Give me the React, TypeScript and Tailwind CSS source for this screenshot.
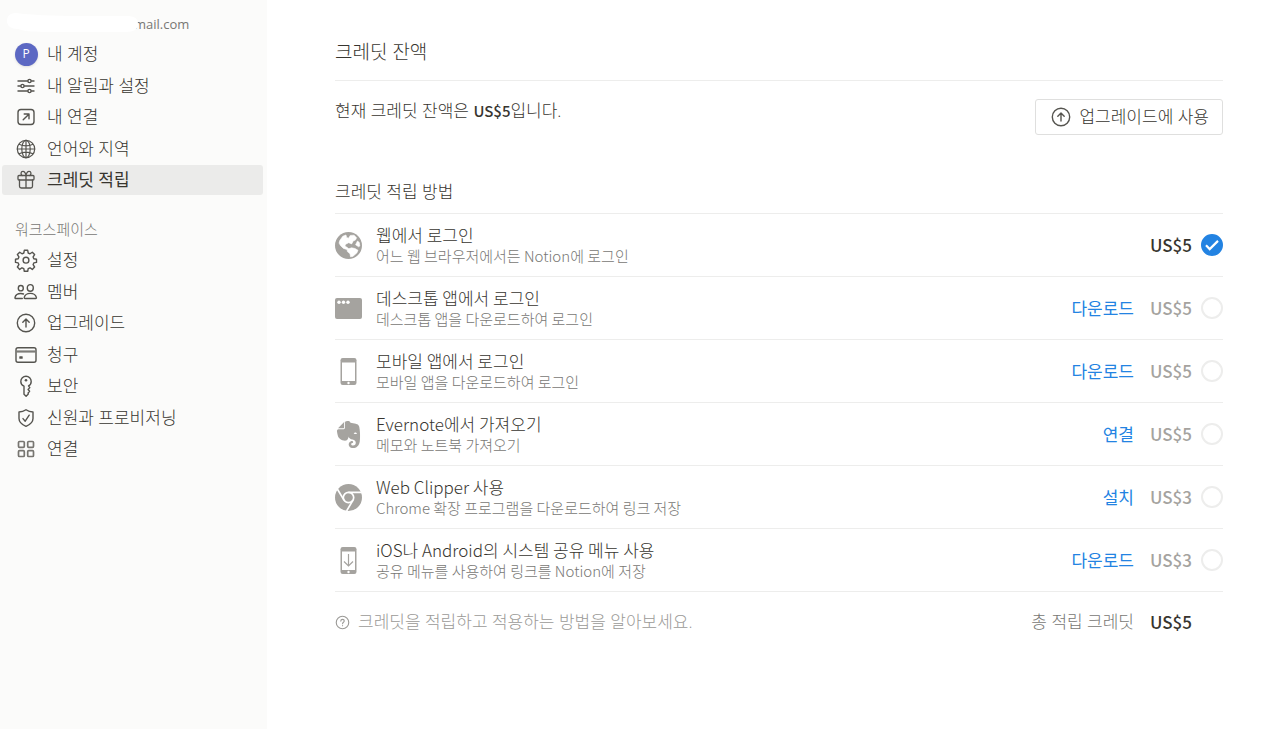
import React from 'react';
import { FaEvernote } from 'react-icons/fa';

type IconProps = { className?: string };

// Line icons of the side menu
const Line = ({ children, className }: { children: React.ReactNode; className?: string }) => (
  <svg
    viewBox="0 0 24 24"
    className={className ?? 'w-6 h-6'}
    fill="none"
    stroke="currentColor"
    strokeWidth="1.4"
    strokeLinecap="round"
    strokeLinejoin="round"
    aria-hidden="true"
  >
    {children}
  </svg>
);

const SlidersIcon = () => (
  <Line>
    <path d="M4 7h9.600M17.400 7H20M4 12h2.600M10.400 12H20M4 17h9.600M17.400 17H20" />
    <circle cx="15.500" cy="7" r="1.600" />
    <circle cx="8.500" cy="12" r="1.600" />
    <circle cx="15.500" cy="17" r="1.600" />
  </Line>
);

const OpenIcon = () => (
  <Line>
    <rect x="4" y="4.500" width="16" height="15" rx="3" />
    <path d="M9.200 14.800l5.400-5.400M10.200 9h4.800v4.800" />
  </Line>
);

const GlobeIcon = () => (
  <Line>
    <g strokeWidth="1.2">
      <circle cx="12" cy="12" r="8.700" />
      <ellipse cx="12" cy="12" rx="4.200" ry="8.700" />
      <path d="M12 3.300v17.400M3.300 12h17.400M5 7.300c4 1.800 10 1.800 14 0M5 16.700c4-1.800 10-1.800 14 0" />
    </g>
  </Line>
);

const GiftIcon = () => (
  <Line>
    <g strokeWidth="1.3">
      <rect x="4" y="7.500" width="16" height="4.500" rx="1" />
      <path d="M5.500 12v6.200c0 1 .8 1.800 1.800 1.800h9.400c1 0 1.800-.8 1.800-1.800V12M12 7.500V20" />
      <path d="M12 7.500C11.500 4.600 10.300 3.300 8.900 3.300 6.600 3.300 6.600 6.500 8 7.500M12 7.500c.5-2.900 1.700-4.200 3.100-4.200 2.300 0 2.300 3.200.9 4.200" />
    </g>
  </Line>
);

const GearIcon = () => (
  <Line>
    <path d="M10.300 2.300h3.400l.5 2.700 1.800.8 2.300-1.600 2.300 2.400-1.500 2.300.7 1.800 2.700.5v3.200l-2.700.5-.7 1.800 1.500 2.300-2.300 2.400-2.300-1.600-1.800.8-.5 2.700h-3.400l-.5-2.700-1.800-.8-2.300 1.600-2.300-2.400 1.500-2.300-.7-1.800-2.700-.5v-3.200l2.700-.5.7-1.800-1.500-2.300 2.300-2.400L8 5.800l1.800-.8z" />
    <circle cx="12" cy="12.200" r="2.900" />
  </Line>
);

const MembersIcon = () => (
  <Line>
    <ellipse cx="6.800" cy="8.200" rx="2.500" ry="2.700" />
    <ellipse cx="16.300" cy="7.900" rx="3" ry="3.300" />
    <path d="M8.300 18.500H1.800c-.6 0-.9-.4-.8-1 .5-2.300 2.800-4 5.800-4 1 0 1.900.2 2.700.5" />
    <path d="M11 18.500c-.7 0-1-.5-.8-1.100.7-2.400 3.200-4 6.100-4s5.400 1.600 6.100 4c.2.600-.1 1.100-.8 1.100z" />
  </Line>
);

const UpgradeIcon = ({ className }: IconProps) => (
  <Line className={className}>
    <circle cx="12" cy="12" r="8.700" />
    <path d="M12 16V8.300M8.800 11.300L12 8.100l3.200 3.200" />
  </Line>
);

const CardIcon = () => (
  <Line>
    <rect x="2" y="4.700" width="20" height="14.600" rx="2" />
    <path d="M2 8.500h20" strokeWidth="2.200" stroke="#7d7c78" strokeLinecap="butt" />
    <rect x="5.300" y="13.200" width="3.400" height="2.600" rx=".5" fill="currentColor" stroke="none" />
  </Line>
);

const KeyIcon = () => (
  <Line>
    <path d="M10 12.100c-2-.8-3.200-2.600-3.200-4.700 0-2.900 2.300-5.200 5.200-5.200s5.200 2.300 5.200 5.200c0 2-1.100 3.700-2.700 4.500l1.300 1.700-1.700 1.900 1.500 1.800-1.500 1.700.2 1-2.200 2.200L10 20.300z" />
    <circle cx="12" cy="6.300" r="1.300" fill="currentColor" stroke="none" />
  </Line>
);

const ShieldIcon = () => (
  <Line>
    <path d="M12 3.700c2 1.500 4.300 2.300 7 2.300v6.500c0 3.700-2.800 6-7 7.900-4.200-1.900-7-4.200-7-7.900V6c2.700 0 5-.8 7-2.300z" />
    <path d="M9 12.600l2.200 2.600 4-6" />
  </Line>
);

const GridIcon = () => (
  <Line>
    <g className="text-[#777570]" stroke="currentColor" strokeWidth="1.700">
      <rect x="4.500" y="4.500" width="5.800" height="5.800" rx="1" />
      <rect x="13.700" y="4.500" width="5.800" height="5.800" rx="1" />
      <rect x="4.500" y="13.700" width="5.800" height="5.800" rx="1" />
      <rect x="13.700" y="13.700" width="5.800" height="5.800" rx="1" />
    </g>
  </Line>
);

// Filled icons of the task list
const EarthIcon = () => (
  <svg viewBox="0 0 27 27" className="w-[27px] h-[27px]" aria-hidden="true">
    <circle cx="13.500" cy="13.500" r="13.500" fill="currentColor" />
    <g fill="#fff" stroke="#fff" strokeWidth=".6" strokeLinejoin="round">
      <path d="M4.800 8.500l3-4.300 3.200-1.200.6 2.400 1.900.8 1.800-2.800 3.700-.2 2.600 2.500-1.200 2.400-2.200.8-1.500 3-3-1.200-3 1.500-.8 1.700 2 1.400 1.600 1.200-1.800.9-3.200-1-2.900-2.700-1.500-2.600z" />
      <path d="M22.500 9l1.800 1.500.5 3.500-1.200.8-3-2z" />
      <path d="M12 17.300l4.600-1.500 3.400.7 3 1.800-1.200 2.700-4 3.400-2.300.4-.5-3-2.600-2.200z" />
    </g>
  </svg>
);

const WindowIcon = () => (
  <svg viewBox="0 0 27 27" className="w-[27px] h-[27px]" aria-hidden="true">
    <rect y="3" width="27" height="21" rx="2" fill="currentColor" />
    <g fill="#fff">
      <circle cx="4" cy="7.300" r="1.700" />
      <circle cx="8.500" cy="7.300" r="1.700" />
      <circle cx="13" cy="7.300" r="1.700" />
    </g>
  </svg>
);

const PhoneIcon = ({ arrow }: { arrow?: boolean }) => (
  <svg viewBox="0 0 27 27" className="w-[27px] h-[27px]" aria-hidden="true">
    <rect x="5.500" width="16" height="27" rx="2.200" fill="currentColor" />
    <path fill="#fff" d="M7 4.500h13V23H7z" />
    <circle cx="13.500" cy="25" r="1.200" fill="#fff" />
    {arrow && (
      <path d="M13.500 7v12M9 14.500l4.500 4.500 4.500-4.500" fill="none" stroke="currentColor" strokeWidth="1.200" />
    )}
  </svg>
);

const EvernoteIcon = () => <FaEvernote className="w-[27px] h-[31px]" aria-hidden="true" />;

const ChromeIcon = () => (
  <svg viewBox="0 0 27 27" className="w-[27px] h-[27px]" aria-hidden="true">
    <circle cx="13.500" cy="13.500" r="13.500" fill="currentColor" />
    <g fill="none" stroke="#fff" strokeWidth="1.700">
      <circle cx="13.500" cy="13.500" r="5.200" />
      <path d="M13.500 8.300H26.500M9 16.100L2.300 5M18 16.100L11.600 27" />
    </g>
  </svg>
);

const HelpIcon = () => (
  <Line className="w-[15px] h-[15px]">
    <g strokeWidth="1.800">
      <circle cx="12" cy="12" r="10" />
      <path d="M9.300 9.700c0-1.600 1.200-2.700 2.800-2.700s2.700 1 2.700 2.500c0 2-2.700 2.200-2.700 4.300M12.100 17v.2" />
    </g>
  </Line>
);

const Avatar = () => (
  <span className="w-[23px] h-[23px] shrink-0 rounded-full bg-[#5c68c3] text-white text-[12px] leading-none font-medium flex items-center justify-center shadow">
    P
  </span>
);

const accountItems = [
  { label: '내 계정', icon: <Avatar /> },
  { label: '내 알림과 설정', icon: <SlidersIcon /> },
  { label: '내 연결', icon: <OpenIcon /> },
  { label: '언어와 지역', icon: <GlobeIcon /> },
  { label: '크레딧 적립', icon: <GiftIcon />, active: true },
];

const workspaceItems = [
  { label: '설정', icon: <GearIcon /> },
  { label: '멤버', icon: <MembersIcon /> },
  { label: '업그레이드', icon: <UpgradeIcon /> },
  { label: '청구', icon: <CardIcon /> },
  { label: '보안', icon: <KeyIcon /> },
  { label: '신원과 프로비저닝', icon: <ShieldIcon /> },
  { label: '연결', icon: <GridIcon /> },
];

const tasks = [
  { title: '웹에서 로그인', text: '어느 웹 브라우저에서든 Notion에 로그인', price: 'US$5', icon: <EarthIcon />, done: true },
  { title: '데스크톱 앱에서 로그인', text: '데스크톱 앱을 다운로드하여 로그인', price: 'US$5', icon: <WindowIcon />, action: '다운로드' },
  { title: '모바일 앱에서 로그인', text: '모바일 앱을 다운로드하여 로그인', price: 'US$5', icon: <PhoneIcon />, action: '다운로드' },
  { title: 'Evernote에서 가져오기', text: '메모와 노트북 가져오기', price: 'US$5', icon: <EvernoteIcon />, action: '연결' },
  { title: 'Web Clipper 사용', text: 'Chrome 확장 프로그램을 다운로드하여 링크 저장', price: 'US$3', icon: <ChromeIcon />, action: '설치' },
  { title: 'iOS나 Android의 시스템 공유 메뉴 사용', text: '공유 메뉴를 사용하여 링크를 Notion에 저장', price: 'US$3', icon: <PhoneIcon arrow />, action: '다운로드' },
];

type MenuItem = { label: string; icon: React.ReactNode; active?: boolean };

const Menu = ({ items }: { items: MenuItem[] }) => (
  <ul>
    {items.map((item) => (
      <li key={item.label} className="odd:h-8 even:h-[31px]">
        <button
          className={`w-full h-[30px] rounded-[3px] pl-3 flex items-center gap-[9px] text-left text-[17px] ${
            item.active ? 'bg-[#ebebea] font-normal' : ''
          }`}
        >
          <span className="w-6 flex justify-center text-[#55544f]">{item.icon}</span>
          {item.label}
        </button>
      </li>
    ))}
  </ul>
);

const App = () => {
  return (
    <div className="min-h-screen flex bg-white text-[#37352f] font-light font-['Open_Sans','Noto_Sans_CJK_KR',sans-serif]">
      {/* Side menu */}
      <aside className="w-[267px] shrink-0 bg-[#fbfbfa] pt-3 pl-[2px] pr-1">
        <div className="relative h-[27px] pl-[132px] text-[13px] leading-6 font-medium text-[#787774]">
          mail.com
          <svg viewBox="0 0 135 22" className="absolute left-1 top-0 w-[135px] h-[22px]" aria-hidden="true">
            <path d="M20 17h4l-1 2h-2z" fill="#787774" />
            <path d="M10 1C3 1 1 5 1 9c0 5 4 8 11 8 8 3 20 3 40 3h68c8 0 12-3 12-8 0-6-4-8-12-8-30 0-80 1-110-3z" fill="#fff" />
          </svg>
        </div>
        <nav aria-label="계정">
          <Menu items={accountItems} />
        </nav>
        <h2 className="mt-5 mb-1 pl-[13px] text-[15px] leading-6 text-[#787774]">워크스페이스</h2>
        <nav aria-label="워크스페이스">
          <Menu items={workspaceItems} />
        </nav>
      </aside>

      {/* Content */}
      <main className="grow pt-9 pb-10 pl-[68px] pr-[58px]">
        <h1 className="h-[45px] border-b border-[#ededec] text-[19px] leading-8 font-light">크레딧 잔액</h1>

        <section className="pt-[18px] flex justify-between items-start">
          <p className="text-[17px] leading-6">
            현재 크레딧 잔액은{' '}
            <strong className="text-[15px] font-medium font-['Noto_Sans_CJK_KR',sans-serif]">US$5</strong>입니다.
          </p>
          <button className="h-9 px-[13px] border border-[#dfdfde] rounded-[3px] flex items-center gap-1.5 text-[17px]">
            <span className="text-[#55544f]">
              <UpgradeIcon />
            </span>
            업그레이드에 사용
          </button>
        </section>

        <h2 className="mt-[43px] h-9 border-b border-[#ededec] text-[17px] leading-7">크레딧 적립 방법</h2>

        <ul className="font-['Noto_Sans_CJK_KR',sans-serif]">
          {tasks.map((task) => (
            <li key={task.title} className="h-[63px] border-b border-[#ededec] flex items-center">
              <span className="w-[27px] mr-[14px] shrink-0 text-[#a5a39f]">{task.icon}</span>
              <div className="grow">
                <div className="text-[17px] leading-[22px]">{task.title}</div>
                <div className="text-[15px] leading-5 text-[#787774]">{task.text}</div>
              </div>
              {task.action && (
                <a href="#" className="text-[17px] font-normal text-[#2383e2]">
                  {task.action}
                </a>
              )}
              <span className={`ml-4 mr-[9px] w-[42px] text-[17px] font-medium ${task.done ? '' : 'text-[#a5a39f]'}`}>
                {task.price}
              </span>
              <label className="relative flex">
                <input
                  type="checkbox"
                  aria-label={task.title}
                  defaultChecked={task.done}
                  className="appearance-none w-[22px] h-[22px] rounded-full border-2 border-[#ededec] checked:border-[#2383e2] checked:bg-[#2383e2]"
                />
                {task.done && (
                  <svg viewBox="0 0 22 22" className="absolute inset-0 w-[22px] h-[22px]" aria-hidden="true">
                    <path d="M5 11.300l3.700 3.800L17 6.900" fill="none" stroke="#fff" strokeWidth="2.200" />
                  </svg>
                )}
              </label>
            </li>
          ))}
        </ul>

        {/* Total */}
        <div className="pt-[18px] flex items-center text-[17px] leading-6">
          <a href="#" className="flex items-center gap-2 text-[#9b9a97]">
            <HelpIcon />
            크레딧을 적립하고 적용하는 방법을 알아보세요.
          </a>
          <span className="ml-auto text-[#787774]">총 적립 크레딧</span>
          <span className="ml-4 mr-[31px] w-[42px] font-medium font-['Noto_Sans_CJK_KR',sans-serif]">US$5</span>
        </div>
      </main>
    </div>
  );
};

export default App;
